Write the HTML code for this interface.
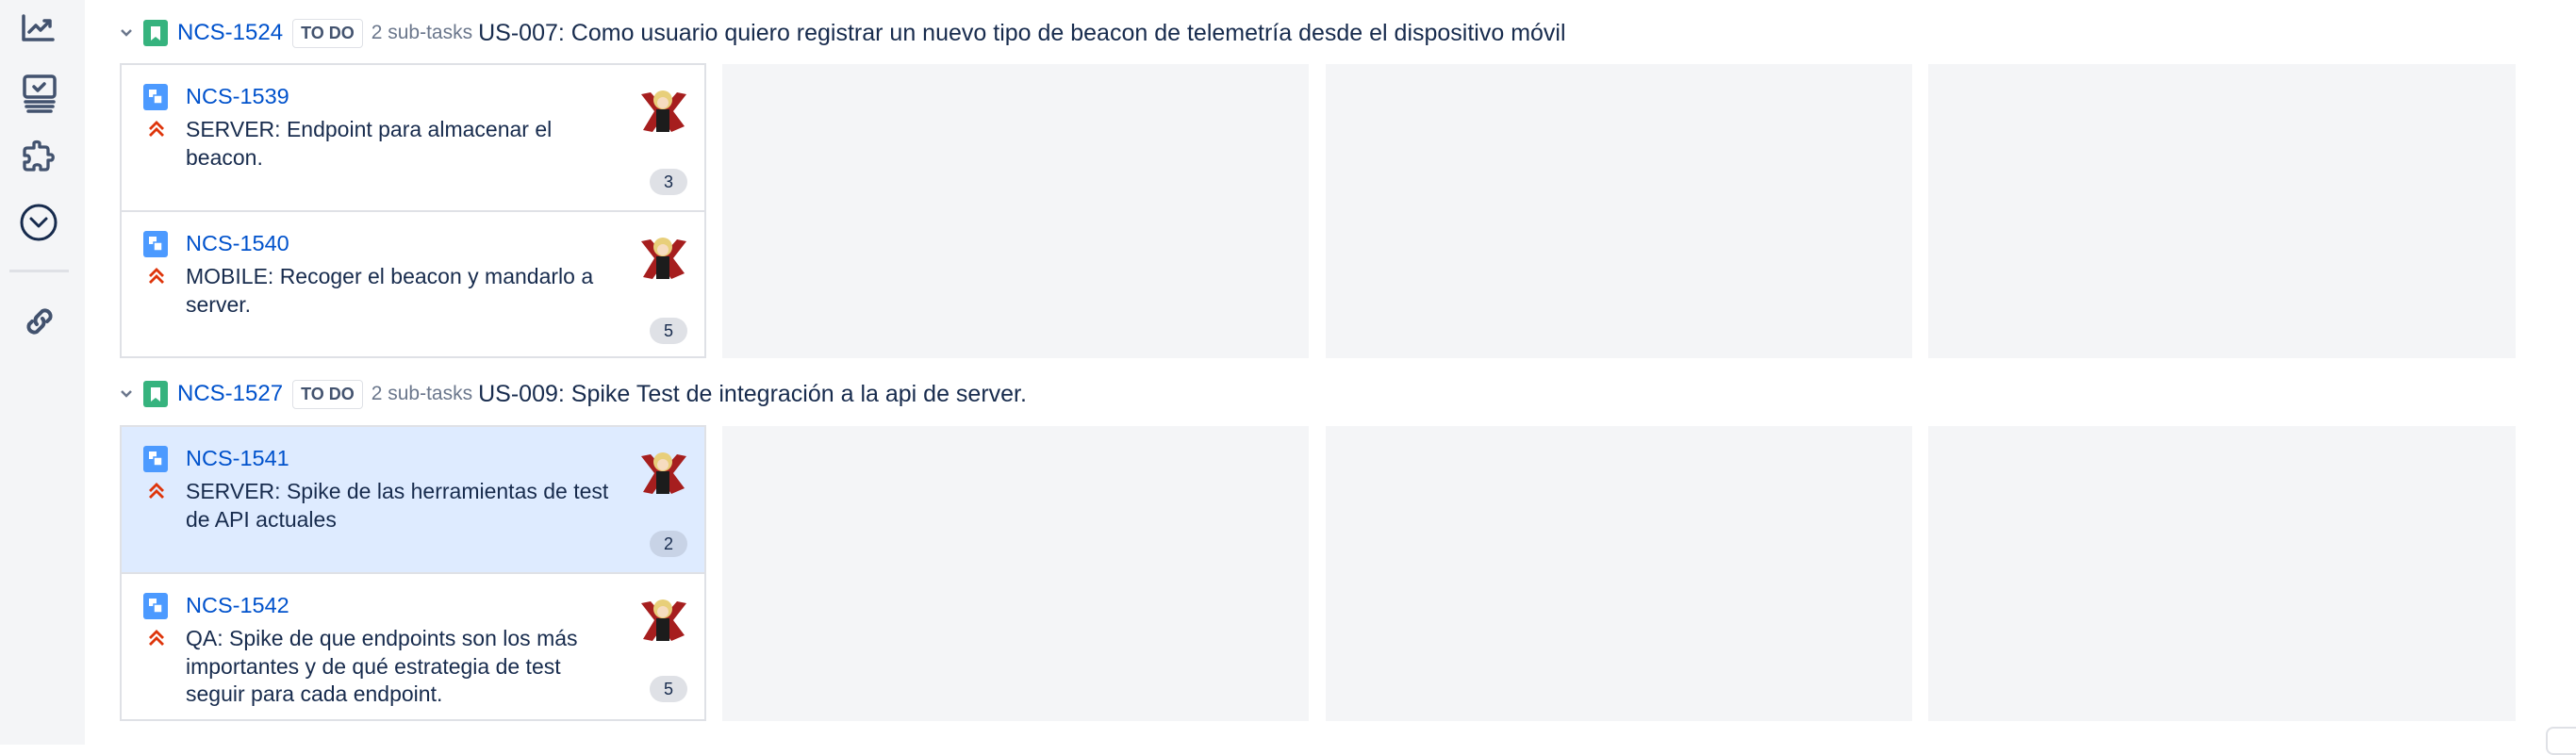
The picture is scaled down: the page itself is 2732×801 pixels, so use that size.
<!DOCTYPE html>
<html><head><meta charset="utf-8"><style>
*{margin:0;padding:0;box-sizing:border-box}
body{width:2732px;height:790px;background:#fff;position:relative;overflow:hidden;font-family:"Liberation Sans",sans-serif;color:#172b4d}
.abs{position:absolute}
.side{left:0;top:0;width:90px;height:790px;background:#f4f5f7}
.hdr{position:absolute;height:36px;display:flex;align-items:center;font-size:25px;white-space:nowrap}
.key{color:#0052cc;font-size:24px}
.todo{border:1px solid #dfe1e6;border-radius:4px;font-size:18px;font-weight:bold;color:#42526e;padding:4px 8px;margin:0 9px 0 10px}
.sub{color:#6b778c;font-size:21px;margin-right:6px}
.cell{position:absolute;background:#f4f5f7}
.col1{position:absolute;left:127px;width:622px;border:2px solid #dfe1e6;background:#fff}
.card{position:absolute;left:0;width:618px;border-bottom:2px solid #dfe1e6}
.card .ic{position:absolute;left:23px;top:20px}
.card .k{position:absolute;left:68px;top:20px;font-size:23.5px;color:#0052cc}
.card .pr{position:absolute;left:28px;top:59px}
.card .s{position:absolute;left:68px;top:54px;width:462px;font-size:23px;line-height:29.5px;color:#172b4d}
.card .av{position:absolute;left:545px;top:19px}
.card .b{position:absolute;left:560px;width:40px;height:28px;border-radius:14px;background:#dfe1e6;font-size:18px;text-align:center;line-height:28px;color:#172b4d}
</style></head><body>
<div class="abs side">
<svg class="abs" style="left:20px;top:14px" width="40" height="32" viewBox="0 0 40 32" fill="none" stroke="#42526e" stroke-width="3.5" stroke-linecap="round" stroke-linejoin="round"><path d="M5 3v25h31"/><path d="M11 20l7-7 5 5 9-9"/><path d="M27 8h6v6"/></svg>
<svg class="abs" style="left:22px;top:78px" width="40" height="42" viewBox="0 0 40 42" fill="none" stroke="#42526e" stroke-width="3.5" stroke-linecap="round" stroke-linejoin="round"><rect x="4" y="3" width="32" height="22" rx="3"/><path d="M14 14l4 4 7-7"/><path d="M5 30h30M6 35h28M8 40h24"/></svg>
<svg class="abs" style="left:22px;top:148px" width="38" height="38" viewBox="0 0 38 38" fill="none" stroke="#42526e" stroke-width="3.3" stroke-linejoin="round"><path d="M14 4c0-2 6-2 6 0v4h6c2 0 3 1 3 3v5h3c3 0 3 6 0 6h-3v7c0 2-1 3-3 3h-5v-3c0-3-7-3-7 0v3H7c-2 0-3-1-3-3v-5h3c3 0 3-7 0-7H4v-5c0-2 1-3 3-3h7z"/></svg>
<svg class="abs" style="left:20px;top:215px" width="42" height="42" viewBox="0 0 42 42" fill="none" stroke="#172b4d" stroke-width="3"><circle cx="21" cy="21" r="18"/><path d="M13 17l8 8 8-8" stroke-linecap="round" stroke-linejoin="round"/></svg>
<div class="abs" style="left:10px;top:286px;width:63px;height:3px;background:#dfe1e6"></div>
<svg class="abs" style="left:22px;top:321px" width="40" height="40" viewBox="0 0 40 40" fill="none" stroke="#42526e" stroke-width="4" stroke-linecap="round"><path d="M17 23a6 6 0 0 1 0-8l6-6a6 6 0 0 1 8 8l-3 3"/><path d="M23 17a6 6 0 0 1 0 8l-6 6a6 6 0 0 1-8-8l3-3"/></svg>
</div>

<div class="hdr" style="left:124px;top:17px">
<svg width="20" height="14" viewBox="0 0 20 14" style="margin-right:8px"><path d="M5 4l5 5 5-5" fill="none" stroke="#6b778c" stroke-width="2.5"/></svg>
<svg width="26" height="28" viewBox="0 0 26 28" style="margin-right:10px"><rect width="26" height="28" rx="3" fill="#36b37e"/><path d="M8 7h10v15l-5-4-5 4z" fill="#fff"/></svg>
<span class="key">NCS-1524</span><span class="todo">TO DO</span><span class="sub">2 sub-tasks</span><span>US-007: Como usuario quiero registrar un nuevo tipo de beacon de telemetría desde el dispositivo móvil</span>
</div>
<div class="cell" style="left:766px;top:68px;width:622px;height:312px"></div>
<div class="cell" style="left:1406px;top:68px;width:622px;height:312px"></div>
<div class="cell" style="left:2045px;top:68px;width:623px;height:312px"></div>
<div class="col1" style="top:67px;height:313px">
 <div class="card" style="top:0;height:156px">
  <svg class="ic" width="26" height="28" viewBox="0 0 26 28"><rect width="26" height="28" rx="3" fill="#4c9aff"/><rect x="6" y="6" width="8" height="8" fill="#fff"/><rect x="11" y="12" width="9" height="9" fill="#fff" stroke="#4c9aff" stroke-width="1.5"/></svg>
  <div class="k">NCS-1539</div>
  <svg class="pr" width="18" height="18" viewBox="0 0 18 18" fill="none" stroke="#de350b" stroke-width="2.8"><path d="M2 9l7-7 7 7M2 16l7-7 7 7"/></svg>
  <div class="s">SERVER: Endpoint para almacenar el beacon.</div>
  <svg class="av" width="56" height="58" viewBox="0 0 56 58"><path d="M6 12l14 18-12 20 10 2 10-14 10 14 14-6-12-16 14-18-10-2-14 16-14-16z" fill="#a61e1e"/><rect x="22" y="28" width="14" height="24" fill="#1c1c1c"/><circle cx="29" cy="18" r="10" fill="#e8cf7a"/><circle cx="29" cy="21" r="6" fill="#f6dcc0"/></svg>
  <div class="b" style="top:110px">3</div>
 </div>
 <div class="card" style="top:156px;height:157px;border-bottom:none">
  <svg class="ic" width="26" height="28" viewBox="0 0 26 28"><rect width="26" height="28" rx="3" fill="#4c9aff"/><rect x="6" y="6" width="8" height="8" fill="#fff"/><rect x="11" y="12" width="9" height="9" fill="#fff" stroke="#4c9aff" stroke-width="1.5"/></svg>
  <div class="k">NCS-1540</div>
  <svg class="pr" width="18" height="18" viewBox="0 0 18 18" fill="none" stroke="#de350b" stroke-width="2.8"><path d="M2 9l7-7 7 7M2 16l7-7 7 7"/></svg>
  <div class="s">MOBILE: Recoger el beacon y mandarlo a server.</div>
  <svg class="av" width="56" height="58" viewBox="0 0 56 58"><path d="M6 12l14 18-12 20 10 2 10-14 10 14 14-6-12-16 14-18-10-2-14 16-14-16z" fill="#a61e1e"/><rect x="22" y="28" width="14" height="24" fill="#1c1c1c"/><circle cx="29" cy="18" r="10" fill="#e8cf7a"/><circle cx="29" cy="21" r="6" fill="#f6dcc0"/></svg>
  <div class="b" style="top:112px">5</div>
 </div>
</div>

<div class="hdr" style="left:124px;top:400px">
<svg width="20" height="14" viewBox="0 0 20 14" style="margin-right:8px"><path d="M5 4l5 5 5-5" fill="none" stroke="#6b778c" stroke-width="2.5"/></svg>
<svg width="26" height="28" viewBox="0 0 26 28" style="margin-right:10px"><rect width="26" height="28" rx="3" fill="#36b37e"/><path d="M8 7h10v15l-5-4-5 4z" fill="#fff"/></svg>
<span class="key">NCS-1527</span><span class="todo">TO DO</span><span class="sub">2 sub-tasks</span><span>US-009: Spike Test de integración a la api de server.</span>
</div>
<div class="cell" style="left:766px;top:452px;width:622px;height:313px"></div>
<div class="cell" style="left:1406px;top:452px;width:622px;height:313px"></div>
<div class="cell" style="left:2045px;top:452px;width:623px;height:313px"></div>
<div class="col1" style="top:451px;height:314px">
 <div class="card" style="top:0;height:156px;background:#deebff">
  <svg class="ic" width="26" height="28" viewBox="0 0 26 28"><rect width="26" height="28" rx="3" fill="#4c9aff"/><rect x="6" y="6" width="8" height="8" fill="#fff"/><rect x="11" y="12" width="9" height="9" fill="#fff" stroke="#4c9aff" stroke-width="1.5"/></svg>
  <div class="k">NCS-1541</div>
  <svg class="pr" width="18" height="18" viewBox="0 0 18 18" fill="none" stroke="#de350b" stroke-width="2.8"><path d="M2 9l7-7 7 7M2 16l7-7 7 7"/></svg>
  <div class="s">SERVER: Spike de las herramientas de test de API actuales</div>
  <svg class="av" width="56" height="58" viewBox="0 0 56 58"><path d="M6 12l14 18-12 20 10 2 10-14 10 14 14-6-12-16 14-18-10-2-14 16-14-16z" fill="#a61e1e"/><rect x="22" y="28" width="14" height="24" fill="#1c1c1c"/><circle cx="29" cy="18" r="10" fill="#e8cf7a"/><circle cx="29" cy="21" r="6" fill="#f6dcc0"/></svg>
  <div class="b" style="top:110px;background:#c8d3e6">2</div>
 </div>
 <div class="card" style="top:156px;height:158px;border-bottom:none">
  <svg class="ic" width="26" height="28" viewBox="0 0 26 28"><rect width="26" height="28" rx="3" fill="#4c9aff"/><rect x="6" y="6" width="8" height="8" fill="#fff"/><rect x="11" y="12" width="9" height="9" fill="#fff" stroke="#4c9aff" stroke-width="1.5"/></svg>
  <div class="k">NCS-1542</div>
  <svg class="pr" width="18" height="18" viewBox="0 0 18 18" fill="none" stroke="#de350b" stroke-width="2.8"><path d="M2 9l7-7 7 7M2 16l7-7 7 7"/></svg>
  <div class="s">QA: Spike de que endpoints son los más importantes y de qué estrategia de test seguir para cada endpoint.</div>
  <svg class="av" width="56" height="58" viewBox="0 0 56 58"><path d="M6 12l14 18-12 20 10 2 10-14 10 14 14-6-12-16 14-18-10-2-14 16-14-16z" fill="#a61e1e"/><rect x="22" y="28" width="14" height="24" fill="#1c1c1c"/><circle cx="29" cy="18" r="10" fill="#e8cf7a"/><circle cx="29" cy="21" r="6" fill="#f6dcc0"/></svg>
  <div class="b" style="top:108px">5</div>
 </div>
</div>
<div class="abs" style="left:2700px;top:771px;width:40px;height:30px;border:2px solid #dfe1e6;border-radius:8px;background:#fff"></div>
</body></html>
